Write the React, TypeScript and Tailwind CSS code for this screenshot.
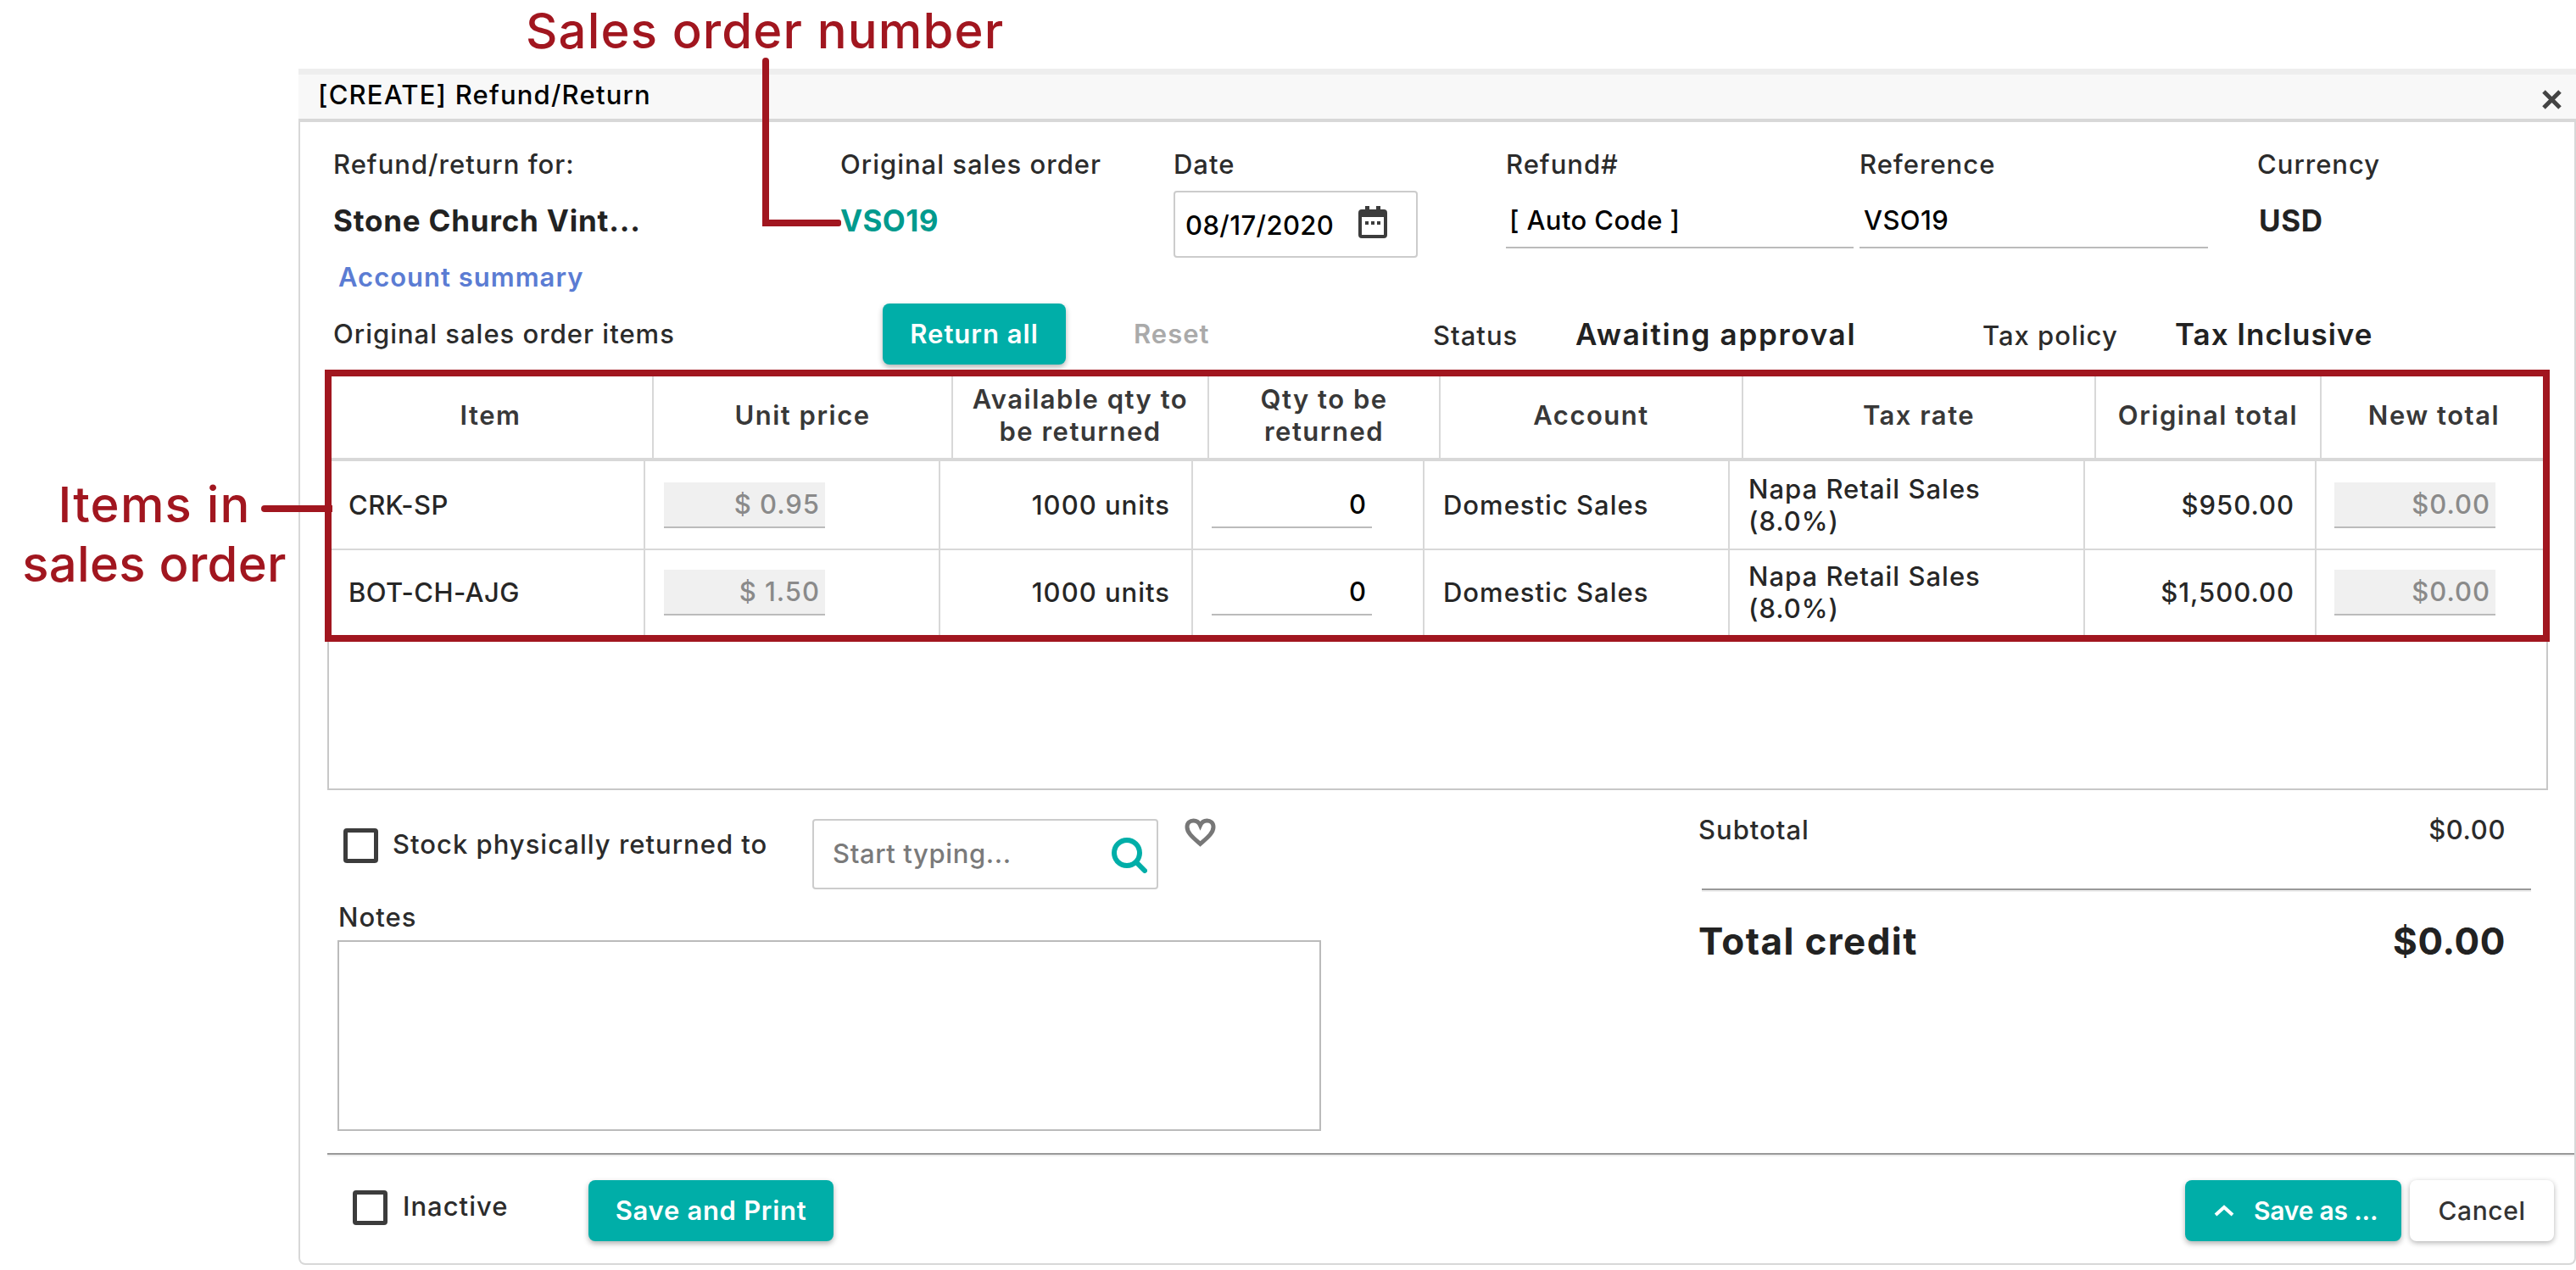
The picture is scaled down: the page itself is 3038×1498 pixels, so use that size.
import React from "react";

const RED = "#a1161f";

const headerCols = [
  { label: "Item", w: "w-[383px]" },
  { label: "Unit price", w: "w-[353px]" },
  { label: "Available qty to be returned", w: "w-[302px]" },
  { label: "Qty to be returned", w: "w-[273px]" },
  { label: "Account", w: "w-[357px]" },
  { label: "Tax rate", w: "w-[416px]" },
  { label: "Original total", w: "w-[266px]" },
  { label: "New total", w: "w-[265px]" }
];

const rows = [
  { item: "CRK-SP", price: "$ 0.95", total: "$950.00", height: "h-[105px] border-b-2" },
  { item: "BOT-CH-AJG", price: "$ 1.50", total: "$1,500.00", height: "h-[100px]" }
];

function Checkbox() {
  return <div className="w-[41px] h-[41px] shrink-0 rounded-[4px] border-[5px] border-[#3c3c3c] bg-white"></div>;
}

function GreyInput({ value, width }: { value: string; width: string }) {
  return (
    <div className={`${width} h-[54px] flex items-center justify-end pr-[6px] bg-[#f0f0f0] border-b-2 border-[#bbbbbb] text-[#8a8a8a]`}>
      {value}
    </div>
  );
}

function ItemRow({ item, price, total, height }: { item: string; price: string; total: string; height: string }) {
  const cell = "h-full flex items-center border-r-2 border-[#d8d8d8]";
  return (
    <div className={`flex ${height} border-[#d8d8d8] text-[#262626]`}>
      <div className={`${cell} w-[373px] pl-[23px] tracking-[0.4px]`}>{item}</div>
      <div className={`${cell} w-[348px] pl-[22px]`}>
        <GreyInput value={price} width="w-[190px]" />
      </div>
      <div className={`${cell} w-[298px] justify-end pr-[25px]`}>1000 units</div>
      <div className={`${cell} w-[273px] pl-[22px]`}>
        <div className="w-[189px] h-[54px] flex items-center justify-end pr-[6px] border-b-2 border-[#bbbbbb] text-black">0</div>
      </div>
      <div className={`${cell} w-[360px] pl-[22px]`}>Domestic Sales</div>
      <div className={`${cell} w-[419px] pl-[22px] leading-[38px]`}>
        <div>
          Napa Retail Sales
          <br />
          (8.0%)
        </div>
      </div>
      <div className={`${cell} w-[273px] justify-end pr-[24px] font-medium`}>{total}</div>
      <div className="h-full flex items-center pl-[21px]">
        <GreyInput value="$0.00" width="w-[190px]" />
      </div>
    </div>
  );
}

function TealButton({ children, className }: { children: React.ReactNode; className: string }) {
  return (
    <button className={`${className} rounded-[8px] bg-[#00aea8] text-white font-semibold shadow-[0_3px_6px_rgba(0,0,0,0.3)] flex items-center`}>
      {children}
    </button>
  );
}

function Annotations() {
  return (
    <>
      <div className="absolute left-[620px] top-[6px] text-[58px] leading-[60px] tracking-[1.15px]" style={{ color: RED }}>
        Sales order number
      </div>
      <div className="absolute left-[899px] top-[68px] w-[8px] h-[199px] rounded-t-[4px]" style={{ backgroundColor: RED }}></div>
      <div className="absolute left-[899px] top-[259px] w-[93px] h-[8px] rounded-[3px]" style={{ backgroundColor: RED }}></div>
      <div className="absolute left-[12px] top-[560px] w-[340px] text-center text-[58px] leading-[70px] tracking-[0.3px]" style={{ color: RED }}>
        <span className="tracking-[1.2px]">Items in</span>
        <br />
        sales order
      </div>
      <div className="absolute left-[308px] top-[596px] w-[84px] h-[8px] rounded-l-[4px]" style={{ backgroundColor: RED }}></div>
      <div className="absolute left-[383px] top-[436px] w-[2624px] h-[321px] border-[8px]" style={{ borderColor: RED }}></div>
    </>
  );
}

export default function App() {
  return (
    <div className="relative w-[3038px] h-[1498px] overflow-hidden bg-white text-[31px] leading-[40px] text-[#2b2b2b] font-['Inter',sans-serif] font-medium tracking-[1px]">
      <div className="ml-[352px] pt-[81px] w-[2686px]">
        <div className="h-[7px] bg-[#eeeeee]"></div>
        <div className="h-[56px] flex items-center justify-between pl-[24px] pr-[17px] bg-[#f8f8f8] border-b-4 border-[#d8d8d8] text-black">
          <span className="-mt-[4px] -ml-[1px] tracking-[1.2px]">[CREATE] Refund/Return</span>
          <svg width="23" height="23" viewBox="0 0 23 23" fill="none" stroke="#444" strokeWidth="5" className="mt-[6px]">
            <path d="M2 2 L21 21 M21 2 L2 21" />
          </svg>
        </div>

        <div className="h-[1348px] border-2 border-t-0 border-[#d8d8d8] rounded-b-[8px]">
          <div className="h-[214px] pt-[30px] pl-[39px] flex">
            <div className="w-[598px]">
              <div>Refund/return for:</div>
              <div className="mt-[26px] text-[35px] font-bold tracking-[0.8px] text-[#222]">Stone Church Vint...</div>
              <div className="mt-[27px] ml-[6px] font-semibold text-[#5b7cd3]">Account summary</div>
            </div>
            <div className="w-[393px]">
              <div>Original sales order</div>
              <div className="mt-[26px] text-[35px] font-bold tracking-[0.4px] text-[#009a8e]">VSO19</div>
            </div>
            <div className="w-[392px]">
              <div>Date</div>
              <div className="mt-[11px] w-[288px] h-[79px] flex items-center justify-between pl-[12px] pr-[34px] border-2 border-[#cccccc] rounded-[4px] text-black tracking-[0.4px]">
                <span className="pt-[2px]">08/17/2020</span>
                <svg width="34" height="38" viewBox="0 0 34 38" className="mb-[6px]">
                  <path d="M8 0h5v4h8V0h5v4h4a4 4 0 0 1 4 4v26a4 4 0 0 1-4 4H4a4 4 0 0 1-4-4V8a4 4 0 0 1 4-4h4z" fill="#3c3c3c" />
                  <rect x="4" y="13" width="26" height="21" fill="white" />
                  <rect x="8" y="18" width="4" height="4" fill="#3c3c3c" />
                  <rect x="15" y="18" width="4" height="4" fill="#3c3c3c" />
                  <rect x="22" y="18" width="4" height="4" fill="#3c3c3c" />
                </svg>
              </div>
            </div>
            <div className="w-[417px]">
              <div>Refund#</div>
              <div className="mt-[11px] w-[410px] h-[68px] pl-[4px] pt-[15px] border-b-2 border-[#bbbbbb] text-black tracking-[0.4px]">[ Auto Code ]</div>
            </div>
            <div className="w-[469px]">
              <div>Reference</div>
              <div className="mt-[11px] w-[411px] h-[68px] pl-[5px] pt-[15px] border-b-2 border-[#bbbbbb] text-black tracking-[0.4px]">VSO19</div>
            </div>
            <div>
              <div>Currency</div>
              <div className="mt-[26px] ml-[2px] text-[35px] font-bold tracking-[0.6px] text-[#222]">USD</div>
            </div>
          </div>

          <div className="h-[72px] pl-[39px] flex items-center">
            <div className="w-[648px]">Original sales order items</div>
            <TealButton className="w-[216px] h-[72px] justify-center">Return all</TealButton>
            <div className="ml-[80px] w-[353px] font-semibold text-[#aaaaaa]">Reset</div>
            <div className="w-[168px] pt-[3px]">Status</div>
            <div className="w-[480px] text-[35px] font-semibold tracking-[1.7px] text-[#222]">Awaiting approval</div>
            <div className="w-[227px] pt-[3px]">Tax policy</div>
            <div className="text-[35px] font-semibold text-[#222]">Tax Inclusive</div>
          </div>

          <div className="mt-[10px] ml-[32px] w-[2619px] h-[492px] border-2 border-[#c8c8c8]">
            <div className="flex h-[102px] border-b-4 border-[#d8d8d8] font-semibold text-[#383838] leading-[38px] tracking-[1.5px]">
              {headerCols.map((col) => (
                <div key={col.label} className={`${col.w} h-full px-[12px] pb-[3px] flex items-center justify-center text-center border-r-2 border-[#d8d8d8] last:border-r-0`}>
                  {col.label}
                </div>
              ))}
            </div>
            {rows.map((r) => (
              <ItemRow key={r.item} {...r} />
            ))}
          </div>

          <div className="h-[428px] flex">
            <div className="w-[1649px]">
              <div className="mt-[34px] flex items-start h-[83px]">
                <div className="ml-[51px] mt-[11px]">
                  <Checkbox />
                </div>
                <div className="ml-[17px] mt-[10px] w-[495px]">Stock physically returned to</div>
                <div className="w-[408px] h-[83px] flex items-center justify-between pl-[22px] pr-[11px] border-2 border-[#cccccc] rounded-[4px] text-[#7a7a7a] tracking-[0.6px]">
                  <span className="pb-[2px]">Start typing...</span>
                  <svg width="42" height="42" viewBox="0 0 42 42" fill="none" stroke="#00aea8" strokeWidth="6" strokeLinecap="round" className="mt-[3px]">
                    <circle cx="18" cy="18" r="15" />
                    <path d="M29 29 L39 39" />
                  </svg>
                </div>
                <svg width="37" height="34" viewBox="0 0 37 34" fill="none" stroke="#777" strokeWidth="5" className="ml-[31px] -mt-[1px]">
                  <path d="M18.5 30.5 C10 23 3 17.5 3 10.5 C3 5.5 6.5 3 10.5 3 C14 3 17 5 18.5 8.5 C20 5 23 3 26.5 3 C30.5 3 34 5.5 34 10.5 C34 17.5 27 23 18.5 30.5 Z" />
                </svg>
              </div>
              <div className="ml-[45px] mt-[13px]">Notes</div>
              <div className="ml-[44px] mt-[7px] w-[1160px] h-[225px] border-2 border-[#bbbbbb]"></div>
            </div>
            <div className="w-[952px]">
              <div className="mt-[27px] flex justify-between">
                <span>Subtotal</span>
                <span className="tracking-[0.6px]">$0.00</span>
              </div>
              <div className="mt-[49px] ml-[4px] w-[978px] h-[4px] border-t-2 border-[#999999] bg-[#eeeeee]"></div>
              <div className="mt-[28px] flex justify-between text-[44px] leading-[60px] font-bold text-[#222]">
                <span className="tracking-[1.4px]">Total credit</span>
                <span className="tracking-[0.6px]">$0.00</span>
              </div>
            </div>
          </div>

          <div className="ml-[32px] h-[4px] border-t-2 border-[#999999] bg-[#eeeeee]"></div>
          <div className="pt-[28px] flex items-start">
            <div className="ml-[62px] mt-[12px]">
              <Checkbox />
            </div>
            <div className="ml-[18px] mt-[11px] w-[219px]">Inactive</div>
            <TealButton className="w-[289px] h-[72px] justify-center tracking-[0.7px]">Save and Print</TealButton>
            <TealButton className="ml-[1594px] w-[255px] h-[72px] pl-[34px] gap-[23px] text-[30px] tracking-[-0.2px]">
              <svg width="24" height="14" viewBox="0 0 24 14" fill="none" stroke="white" strokeWidth="4">
                <path d="M2 12 L12 3 L22 12" />
              </svg>
              <span>Save as ...</span>
            </TealButton>
            <button className="ml-[10px] w-[170px] h-[72px] rounded-[8px] bg-white shadow-[0_2px_6px_rgba(0,0,0,0.3)] text-[#333] text-[30px] tracking-[0.6px]">Cancel</button>
          </div>
        </div>
      </div>

      <Annotations />
    </div>
  );
}
